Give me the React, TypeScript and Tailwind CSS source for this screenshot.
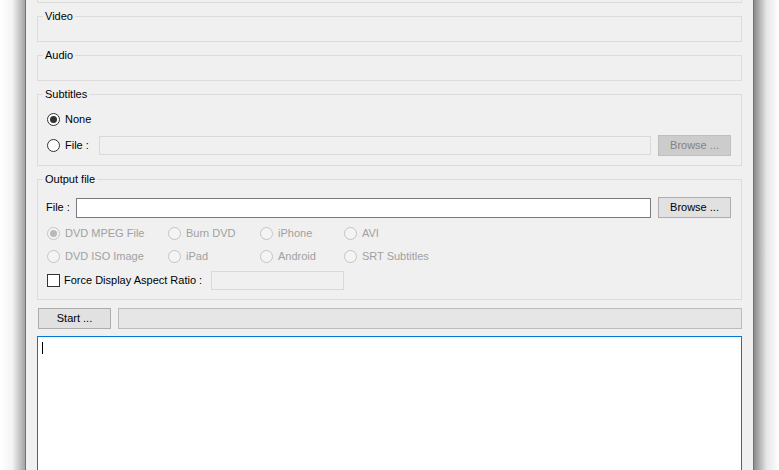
import React from 'react'

const Radio = ({ checked = false, disabled = false }: { checked?: boolean; disabled?: boolean }) => (
  <span
    className={`flex h-[13px] w-[13px] shrink-0 items-center justify-center rounded-full border ${
      disabled ? 'border-[#c4c4c4] bg-[#f4f4f4]' : 'border-[#333333] bg-white'
    }`}
  >
    {checked && <span className={`h-[7px] w-[7px] rounded-full ${disabled ? 'bg-[#b9b9b9]' : 'bg-[#333333]'}`} />}
  </span>
)

const Button = ({ children, disabled = false, className = '' }: { children: React.ReactNode; disabled?: boolean; className?: string }) => (
  <div
    className={`flex h-[21px] shrink-0 items-center justify-center border ${
      disabled ? 'border-[#bfbfbf] bg-[#cccccc] text-[#838383]' : 'border-[#adadad] bg-[#e1e1e1] text-black'
    } ${className}`}
  >
    {children}
  </div>
)

const formats = [
  { label: 'DVD MPEG File', checked: true },
  { label: 'Burn DVD' },
  { label: 'iPhone' },
  { label: 'AVI' },
  { label: 'DVD ISO Image' },
  { label: 'iPad' },
  { label: 'Android' },
  { label: 'SRT Subtitles' },
]

export default function App() {
  return (
    <div className="flex h-[470px] w-[779px] overflow-hidden bg-white font-['Liberation_Sans',Arial,sans-serif] text-[11px] leading-[13px] text-black">
      {/* window shadow, left */}
      <div className="w-[25px] shrink-0 bg-linear-to-r from-white via-[#f3f3f3] to-[#a4a4a4]" />

      <div className="flex w-[729px] shrink-0 flex-col overflow-hidden border-x border-[#38945a] bg-[#f0f0f0] px-[11px]">
        <div className="h-[3px] shrink-0 border-x border-b border-[#dcdcdc]" />

        <fieldset className="mt-[7px] h-[32px] shrink-0 border border-[#dcdcdc]">
          <legend className="ml-[5px] px-[2px]">Video</legend>
        </fieldset>

        <fieldset className="mt-[7px] h-[32px] shrink-0 border border-[#dcdcdc]">
          <legend className="ml-[5px] px-[2px]">Audio</legend>
        </fieldset>

        <fieldset className="mt-[7px] h-[78px] shrink-0 border border-[#dcdcdc]">
          <legend className="ml-[5px] px-[2px]">Subtitles</legend>
          <div className="flex flex-col pt-[12px] pr-[10px] pl-[9px]">
            <div className="flex h-[13px] items-center gap-[5px]">
              <Radio checked />
              <span>None</span>
            </div>
            <div className="mt-[9px] flex h-[21px] items-center">
              <Radio />
              <span className="ml-[5px] w-[34px]">File :</span>
              <div className="h-[19px] flex-1 border border-[#d9d9d9] bg-[#f0f0f0]" />
              <Button disabled className="ml-[7px] w-[73px]">
                Browse ...
              </Button>
            </div>
          </div>
        </fieldset>

        <fieldset className="mt-[7px] h-[127px] shrink-0 border border-[#dcdcdc]">
          <legend className="ml-[5px] px-[2px]">Output file</legend>
          <div className="flex flex-col pt-[11px] pr-[10px] pl-[8px]">
            <div className="flex h-[21px] items-center">
              <span className="w-[30px]">File :</span>
              <div className="h-[20px] flex-1 border border-[#7a7a7a] bg-white" />
              <Button className="ml-[7px] w-[73px]">Browse ...</Button>
            </div>

            <div className="mt-[9px] grid grid-cols-[121px_92px_84px_auto] gap-y-[10px] pl-[1px] text-[#a0a0a0]">
              {formats.map(f => (
                <div key={f.label} className="flex h-[13px] items-center gap-[5px]">
                  <Radio disabled checked={f.checked} />
                  <span>{f.label}</span>
                </div>
              ))}
            </div>

            <div className="mt-[8px] flex h-[19px] items-center pl-[1px]">
              <span className="h-[13px] w-[13px] shrink-0 border border-[#333333] bg-white" />
              <span className="ml-[4px] w-[147px]">Force Display Aspect Ratio :</span>
              <div className="h-[19px] w-[133px] border border-[#d9d9d9] bg-[#f0f0f0]" />
            </div>
          </div>
        </fieldset>

        <div className="mt-[8px] flex h-[21px] shrink-0 items-center">
          <Button className="ml-[1px] w-[73px]">Start ...</Button>
          <div className="ml-[7px] h-[21px] flex-1 border border-[#bcbcbc] bg-[#e6e6e6]" />
        </div>

        <div className="mt-[7px] h-[160px] shrink-0 border border-[#0078d7] bg-white pt-[5px] pl-[4px]">
          <div className="h-[12px] w-px bg-black" />
        </div>
      </div>

      {/* window shadow, right */}
      <div className="w-[25px] shrink-0 bg-linear-to-r from-[#8c8c8c] via-[#e6e6e6] to-white" />
    </div>
  )
}
